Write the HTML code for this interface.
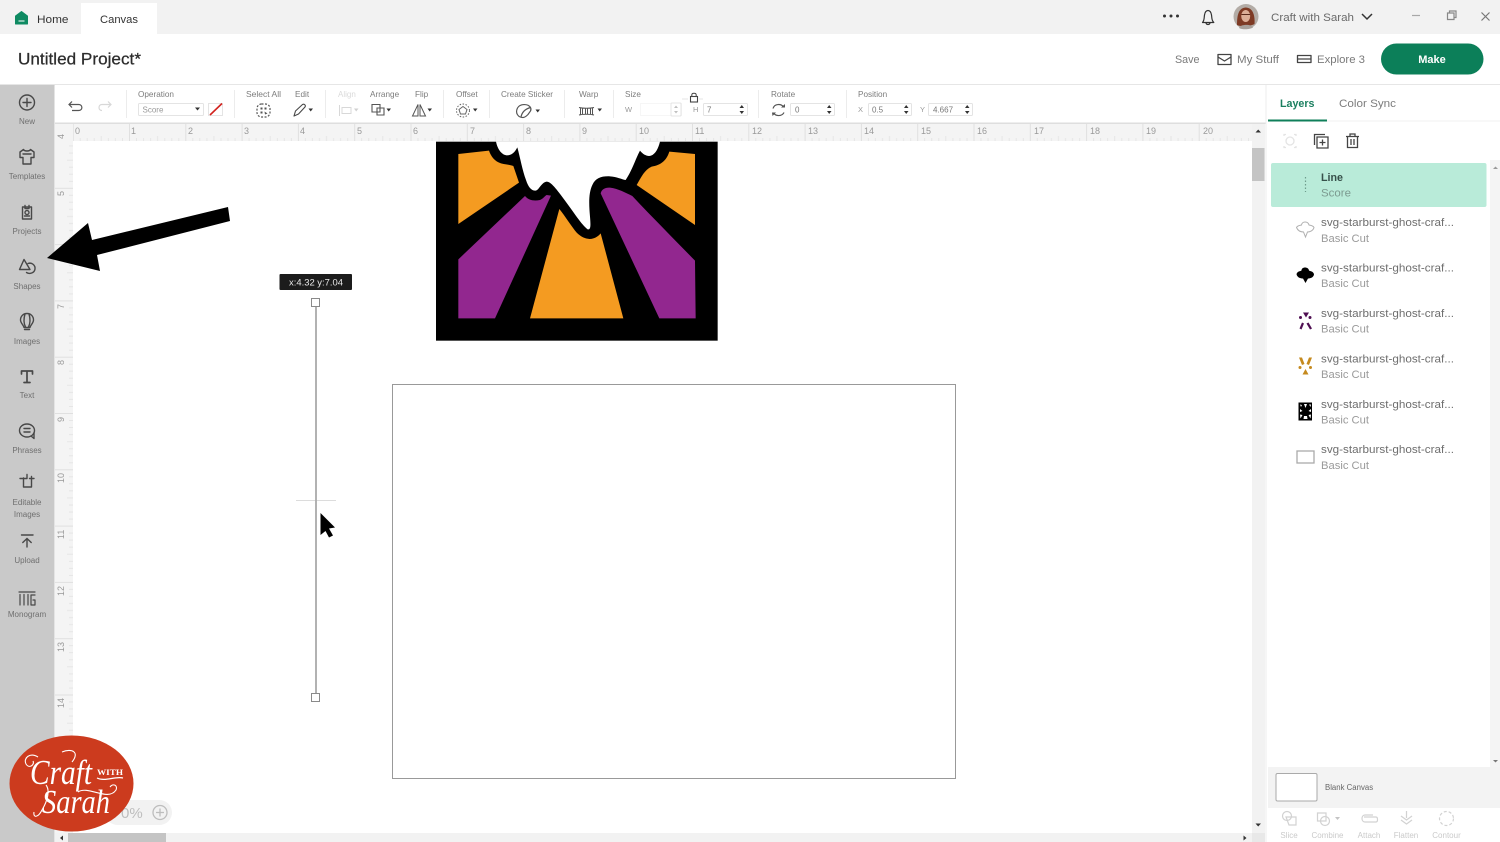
<!DOCTYPE html>
<html><head><meta charset="utf-8"><title>Untitled Project</title>
<style>
html,body{margin:0;padding:0;background:#fff;width:1500px;height:842px;overflow:hidden}
svg{display:block;position:absolute;left:0;top:0;filter:blur(.35px)}
text{font-family:"Liberation Sans",sans-serif}
.lab{font-size:8.200px;fill:#7c7c7c}
.sl{font-size:8px;fill:#6f6f6f;text-anchor:middle}
.ic{fill:none;stroke:#484848;stroke-width:1.400;stroke-linejoin:round;stroke-linecap:round}
.inp{fill:#fff;stroke:#e4e4e4;stroke-width:1}
.lt{font-size:11px;fill:#6e6e6e}
.ls{font-size:11px;fill:#9a9a9a}
.rl{font-size:9px;fill:#999}
.b{font-size:8px;fill:#cacaca;text-anchor:middle}
</style></head><body>
<svg width="1500" height="842" viewBox="0 0 1500 842" xmlns="http://www.w3.org/2000/svg">
<defs>
<pattern id="hr" patternUnits="userSpaceOnUse" x="72.700" y="124" width="56.300" height="17">
<rect width="56.300" height="17" fill="#f4f4f4"/>
<path d="M.5 0V17" stroke="#e0e0e0"/>
<path d="M7.500 14V17M14.500 14V17M21.600 14V17M28.600 12V17M35.700 14V17M42.700 14V17M49.800 14V17" stroke="#e6e6e6"/>
</pattern>
<pattern id="vr" patternUnits="userSpaceOnUse" x="55" y="131.500" width="18" height="56.300">
<rect width="18" height="56.300" fill="#f4f4f4"/>
<path d="M0 .5H18" stroke="#e0e0e0"/>
<path d="M14 7.500H18M14 14.500H18M14 21.600H18M12 28.600H18M14 35.700H18M14 42.700H18M14 49.800H18" stroke="#e6e6e6"/>
</pattern>
</defs>

<!-- top bar -->
<rect width="1500" height="34" fill="#f2f2f2"/>
<rect x="81" y="3" width="76" height="31" fill="#fff"/>
<path d="M15.500 24V16L21.500 11.500L27.500 16V24Z" fill="#0f8a62" stroke="#0f8a62" stroke-linejoin="round"/>
<path d="M18.500 21H24.500" stroke="#fff"/>
<text x="37" y="23" font-size="11" fill="#333" textLength="31.500" lengthAdjust="spacingAndGlyphs">Home</text>
<text x="100" y="23" font-size="11" fill="#333" textLength="38" lengthAdjust="spacingAndGlyphs">Canvas</text>
<circle cx="1164.500" cy="16" r="1.500" fill="#333"/><circle cx="1171" cy="16" r="1.500" fill="#333"/><circle cx="1177.500" cy="16" r="1.500" fill="#333"/>
<path d="M1202.500 22.500C1204.500 20.500 1204 18 1204.500 15C1205 12 1206.300 10.500 1208 10.500C1209.700 10.500 1211 12 1211.500 15C1212 18 1211.500 20.500 1213.800 22.500Z M1206 23C1206.500 25 1209.500 25 1210 23" fill="none" stroke="#333" stroke-width="1.200" stroke-linejoin="round"/>
<circle cx="1246" cy="16.500" r="12.500" fill="#b3aca6"/>
<path d="M1237 25C1237 18 1237.500 8 1245.500 7.500C1254 7.500 1255 18 1254.500 24C1251 26 1241 27 1237 25Z" fill="#7e3a24"/>
<ellipse cx="1245.700" cy="16" rx="4.500" ry="6" fill="#dcae96"/>
<path d="M1241.500 14.500H1250" stroke="#5a2b1c" stroke-width="1"/>
<path d="M1239 28C1240 24 1252 24 1253 27.500C1250 29.500 1243 30 1239 28Z" fill="#a8a09a"/>
<text x="1271" y="21" font-size="11.200" fill="#6a6a6a" textLength="83" lengthAdjust="spacingAndGlyphs">Craft with Sarah</text>
<path d="M1362 14L1367 19L1372 14" fill="none" stroke="#333" stroke-width="1.500"/>
<path d="M1412 15.500H1420" stroke="#a8a8a8" stroke-width="1.200"/>
<path d="M1447.500 13H1454V19.500H1447.500ZM1449.500 13V11H1456V17.500H1454" fill="none" stroke="#888" stroke-width="1.200"/>
<path d="M1481.500 12.500L1489.500 20.500M1489.500 12.500L1481.500 20.500" stroke="#777" stroke-width="1.200"/>

<!-- header -->
<rect y="34" width="1500" height="50" fill="#fff"/>
<text x="18" y="64.500" font-size="16.800" fill="#2c2c2c" stroke="#2c2c2c" stroke-width=".25" textLength="123" lengthAdjust="spacingAndGlyphs">Untitled Project*</text>
<text x="1175" y="63" font-size="11" fill="#7a7a7a" textLength="24.500" lengthAdjust="spacingAndGlyphs">Save</text>
<path d="M1218 59V54.500H1231V64.500H1218ZM1218 57L1224.500 61L1231 57" fill="none" stroke="#444" stroke-width="1.300" stroke-linejoin="round"/>
<text x="1237" y="63" font-size="11" fill="#7a7a7a" textLength="42" lengthAdjust="spacingAndGlyphs">My Stuff</text>
<path d="M1297.500 55.500H1311V62.500H1297.500ZM1297.500 59H1311" fill="none" stroke="#444" stroke-width="1.300" stroke-linejoin="round"/>
<text x="1317" y="63" font-size="11" fill="#7a7a7a" textLength="48" lengthAdjust="spacingAndGlyphs">Explore 3</text>
<rect x="1381" y="43.500" width="102.500" height="31" rx="15.500" fill="#0c7f59"/>
<text x="1432" y="63" font-size="11" font-weight="700" fill="#fff" text-anchor="middle">Make</text>
<rect y="84" width="1500" height="1.300" fill="#e6e6e6"/>

<!-- toolbar -->
<rect x="55" y="85" width="1211" height="38" fill="#fff"/>
<rect x="55" y="122.500" width="1211" height="1.800" fill="#dedede"/>
<path d="M126.500 90V118M234.500 90V118M325.500 90V118M443.500 90V118M489.500 90V118M564.500 90V118M613.500 90V118M758.500 90V118M846.500 90V118" stroke="#ececec"/>
<path d="M72 101.500L69 104.500L72 107.500M69 104.500H78.500C83 104.500 83 110.500 78.500 110.500H72" fill="none" stroke="#555" stroke-width="1.200"/>
<path d="M108 101.500L111 104.500L108 107.500M111 104.500H102C98 104.500 98 110.500 102 110.500" fill="none" stroke="#d8d8d8" stroke-width="1.200"/>

<text class="lab" x="138" y="97">Operation</text>
<rect class="inp" x="138.500" y="103.500" width="65" height="12" rx="1"/>
<text x="142.500" y="112.500" font-size="8" fill="#999">Score</text>
<path d="M195 107.500H200L197.500 110.500Z" fill="#333"/>
<rect class="inp" x="208.500" y="103.500" width="14" height="12"/>
<path d="M210 115L222 103.500" stroke="#d2231f" stroke-width="1.600"/>

<text class="lab" x="246" y="97" textLength="35" lengthAdjust="spacingAndGlyphs">Select All</text>
<rect x="257" y="104" width="13" height="13" rx="4.500" fill="none" stroke="#555" stroke-width="1.200" stroke-dasharray="2 1.500"/>
<path d="M260.500 107.500H262.500V109.500H260.500ZM264.500 107.500H266.500V109.500H264.500ZM260.500 111.500H262.500V113.500H260.500ZM264.500 111.500L267.500 113.500L265 114.500Z" fill="#555"/>
<text class="lab" x="295" y="97">Edit</text>
<path d="M294 116L295.500 111L302.500 104.500C304.500 103.500 306 105.500 305 107L298.500 114Z" class="ic" stroke-width="1.100" style="stroke-width:1.100"/>
<path d="M308.500 108.500H313L310.700 111.500Z" fill="#333"/>

<text x="338" y="97" font-size="8" fill="#dadada">Align</text>
<path d="M339.500 105V116M342 107.500H351V113.500H342Z" fill="none" stroke="#d8d8d8"/><path d="M354 108.500H358.500L356.200 111.500Z" fill="#d0d0d0"/>
<text class="lab" x="370" y="97">Arrange</text>
<path d="M372 104.500H380V112H372ZM377 108H384V115H377Z" fill="none" stroke="#555" stroke-width="1.100"/>
<path d="M386.500 108.500H391L388.700 111.500Z" fill="#333"/>
<text class="lab" x="415" y="97">Flip</text>
<path d="M418 104.500L412.500 116H418ZM420 104.500L425.500 116H420Z" fill="none" stroke="#555" stroke-width="1"/>
<path d="M427.500 108.500H432L429.700 111.500Z" fill="#333"/>
<text class="lab" x="456" y="97">Offset</text>
<path d="M463 106.500L467 109.500L465.500 114H460.500L459 109.500Z" fill="none" stroke="#666" stroke-width="1"/>
<circle cx="463" cy="110.500" r="6.500" fill="none" stroke="#666" stroke-width="1" stroke-dasharray="1.500 1.500"/>
<path d="M473 108.500H477.500L475.200 111.500Z" fill="#333"/>

<text class="lab" x="501" y="97" textLength="52" lengthAdjust="spacingAndGlyphs">Create Sticker</text>
<path d="M530.500 107.500C528 103.500 520 103.500 517.500 108C515 113 518 117.500 523 117.500C525 117.500 526.500 116 528 114.500L530.500 111C531 110 531 108.500 530.500 107.500ZM521 117C522 112 525 109 530.500 107.500" fill="none" stroke="#555" stroke-width="1.200"/>
<path d="M535.500 109.500H540L537.700 112.500Z" fill="#333"/>
<text class="lab" x="579" y="97">Warp</text>
<path d="M579 107.500C583 108.500 590 108.500 594 107.500M579 115C583 114 590 114 594 115M580.500 108V114.500M582.500 108V114.500M585.500 108V114.500M587.500 108V114.500M590.500 108V114.500M592.500 108V114.500" fill="none" stroke="#555" stroke-width="1"/>
<path d="M597.500 108.500H602L599.700 111.500Z" fill="#333"/>
<text class="lab" x="625" y="97">Size</text>
<path d="M682 99H688M699 99H703" stroke="#e4e4e4"/>
<rect x="690.500" y="96.500" width="7" height="5.500" fill="none" stroke="#444" stroke-width="1.100"/>
<path d="M691.800 96.500V95C691.800 92.700 696.200 92.700 696.200 95V96.500" fill="none" stroke="#444" stroke-width="1"/>
<text x="625" y="112" font-size="7.500" fill="#999">W</text>
<rect x="640.500" y="103.500" width="41" height="12" fill="#fff" stroke="#f6f6f6"/>
<rect x="671" y="103" width="10" height="13" rx="1" fill="#fff" stroke="#e4e4e4"/>
<path d="M674 108L676 105.500L678 108ZM674 111L676 113.500L678 111Z" fill="#c0c0c0"/>
<text x="693" y="112" font-size="7.500" fill="#999">H</text>
<rect class="inp" x="703.500" y="103.500" width="44" height="12" rx="1"/>
<text x="707" y="112.500" font-size="8" fill="#777">7</text>
<path d="M739.500 108L741.800 105L744 108ZM739.500 111L741.800 114L744 111Z" fill="#333"/>
<text class="lab" x="771" y="97">Rotate</text>
<path d="M773 108.500C774.500 103.500 781 103.500 783.500 107M784 112.500C782 116.500 776 116.500 773.500 113" fill="none" stroke="#555" stroke-width="1.200"/>
<path d="M781 107.500H785V104ZM772 112.500H776L772.500 116Z" fill="#555"/>
<rect class="inp" x="790.500" y="103.500" width="44" height="12" rx="1"/>
<text x="795" y="112.500" font-size="8" fill="#777">0</text>
<path d="M827 108L829.200 105L831.500 108ZM827 111L829.200 114L831.500 111Z" fill="#333"/>
<text class="lab" x="858" y="97">Position</text>
<text x="858" y="112" font-size="7.500" fill="#999">X</text>
<rect class="inp" x="868.500" y="103.500" width="43" height="12" rx="1"/>
<text x="872" y="112.500" font-size="8" fill="#777">0.5</text>
<path d="M904 108L906.200 105L908.500 108ZM904 111L906.200 114L908.500 111Z" fill="#333"/>
<text x="920" y="112" font-size="7.500" fill="#999">Y</text>
<rect class="inp" x="928.500" y="103.500" width="44" height="12" rx="1"/>
<text x="933" y="112.500" font-size="8" fill="#777">4.667</text>
<path d="M965 108L967.200 105L969.500 108ZM965 111L967.200 114L969.500 111Z" fill="#333"/>

<!-- canvas -->
<rect x="55" y="124" width="1211" height="718" fill="#fff"/>
<rect x="73" y="124" width="1179" height="17" fill="url(#hr)"/>
<rect x="55" y="124" width="18" height="17" fill="#f4f4f4"/>
<rect x="55" y="141" width="18" height="701" fill="url(#vr)"/>
<text class="rl" x="75" y="134">0</text><text class="rl" x="131" y="134">1</text><text class="rl" x="188" y="134">2</text><text class="rl" x="244" y="134">3</text><text class="rl" x="300" y="134">4</text><text class="rl" x="357" y="134">5</text><text class="rl" x="413" y="134">6</text><text class="rl" x="470" y="134">7</text><text class="rl" x="526" y="134">8</text><text class="rl" x="582" y="134">9</text><text class="rl" x="639" y="134">10</text><text class="rl" x="695" y="134">11</text><text class="rl" x="752" y="134">12</text><text class="rl" x="808" y="134">13</text><text class="rl" x="864" y="134">14</text><text class="rl" x="921" y="134">15</text><text class="rl" x="977" y="134">16</text><text class="rl" x="1034" y="134">17</text><text class="rl" x="1090" y="134">18</text><text class="rl" x="1146" y="134">19</text><text class="rl" x="1203" y="134">20</text>
<text class="rl" transform="translate(64 139) rotate(-90)">4</text><text class="rl" transform="translate(64 196) rotate(-90)">5</text><text class="rl" transform="translate(64 309) rotate(-90)">7</text><text class="rl" transform="translate(64 365) rotate(-90)">8</text><text class="rl" transform="translate(64 422) rotate(-90)">9</text><text class="rl" transform="translate(64 483) rotate(-90)">10</text><text class="rl" transform="translate(64 539) rotate(-90)">11</text><text class="rl" transform="translate(64 596) rotate(-90)">12</text><text class="rl" transform="translate(64 652) rotate(-90)">13</text><text class="rl" transform="translate(64 708) rotate(-90)">14</text>

<!-- artwork -->
<g transform="translate(425 130) scale(.33333)">
<rect x="33" y="35" width="845" height="597" fill="#000"/>
<path d="M213 35C218 60 232 76 246 76C260 76 270 66 277 52C286 85 292 120 303 150C310 172 320 183 332 182C342 181 348 158 365 155C378 155 395 178 420 212C445 245 470 285 488 298C498 300 497 285 495 260C492 225 490 190 502 165C512 143 530 138 555 139C575 140 590 148 602 150C622 120 630 90 645 62C655 75 668 80 678 77C692 72 700 55 705 35Z" fill="#fff"/>
<path d="M100 72L192 62C198 80 210 95 228 100C243 104 255 104 265 108L282 158L100 282Z" fill="#f49b21"/>
<path d="M100 388L300 198C310 210 325 214 345 210C355 206 360 197 365 195L378 197L210 565H100Z" fill="#92278f"/>
<path d="M403 237C420 258 440 290 455 308C472 325 490 330 505 325C515 322 522 316 527 310L595 565H315Z" fill="#f49b21"/>
<path d="M527 190C530 178 540 172 555 173C580 176 600 188 622 198C680 260 750 330 810 392L812 565H703Z" fill="#92278f"/>
<path d="M733 65L810 72V285L635 165C650 140 658 120 680 110C710 105 725 90 733 65Z" fill="#f49b21"/>
</g>

<!-- mat rect -->
<rect x="392.500" y="384.500" width="563" height="394" fill="#fff" stroke="#999" stroke-width="1"/>

<!-- line -->
<path d="M296 500.500H336" stroke="#dcdcdc"/>
<path d="M316 307V693" stroke="#aaa" stroke-width="1.800"/>
<rect x="311.500" y="298.500" width="8" height="8" fill="#fff" stroke="#8a8a8a"/>
<rect x="311.500" y="693.500" width="8" height="8" fill="#fff" stroke="#8a8a8a"/>
<rect x="279.500" y="274" width="72.500" height="16" rx="1" fill="#1c1c1c"/>
<text x="289" y="285.500" font-size="9" fill="#e8e8e8" textLength="54" lengthAdjust="spacingAndGlyphs">x:4.32 y:7.04</text>
<path d="M320.500 513L335 527.500L329 528.500L333 535.500L329 537.500L325.500 531L320.500 535Z" fill="#000"/>

<!-- sidebar -->
<rect y="85" width="54.500" height="757" fill="#c9c9c9"/>
<g class="ic">
<circle cx="27" cy="102.500" r="7.500"/><path d="M27 98.500V106.500M23 102.500H31"/>
<path d="M23.500 149.500L20 152V157.500H23V164H31V157.500H34V152L30.500 149.500C29.500 151.500 24.500 151.500 23.500 149.500Z"/><path d="M23 154H31"/>
<path d="M22.500 207H31.500V219H22.500Z"/><path d="M25 205.500V208.500H29V205.500"/><circle cx="27" cy="212.500" r="2"/><path d="M24.500 216H29.500"/>
<path d="M24 259.500L19.500 269.500H30L24 259.500Z"/><path d="M28 263.500C32 262 35.500 265.500 35 269C34.500 273 29.500 274.500 26.500 272.500"/>
<path d="M27 313.500C31 313.500 33.500 316.500 33.500 320C33.500 323 30.500 325 30 327.500H24C23.500 325 20.500 323 20.500 320C20.500 316.500 23 313.500 27 313.500ZM24.500 329.500H29.500M25 314C23.500 319 24 324 25.500 327M29 314C30.500 319 30 324 28.500 327"/>
<path d="M21.500 374V371H32.500V374M27 371V382.500M24 382.500H30" style="stroke-width:1.700"/>
<ellipse cx="27" cy="430.500" rx="7.500" ry="6.500"/><path d="M24 428.500H30M24 432H30M31 436L34 438.500V433"/>
<path d="M23.500 478V487H31.500M31.500 476.500V487M20 478.500H27V474.500M29.500 478.500H34"/>
<path d="M21.500 535H33M27 547V538.500M22.800 542.500L27 538.500L31.200 542.500"/>
<path d="M19 592H35M20 594.500V605M24 594.500V605M28 594.500V605M35 595H31V605H35V600H33" style="stroke-width:1.200"/>
</g>
<text class="sl" x="27" y="124">New</text>
<text class="sl" x="27" y="179">Templates</text>
<text class="sl" x="27" y="234">Projects</text>
<text class="sl" x="27" y="289">Shapes</text>
<text class="sl" x="27" y="344">Images</text>
<text class="sl" x="27" y="398">Text</text>
<text class="sl" x="27" y="453">Phrases</text>
<text class="sl" x="27" y="505">Editable</text>
<text class="sl" x="27" y="517">Images</text>
<text class="sl" x="27" y="563">Upload</text>
<text class="sl" x="27" y="617">Monogram</text>

<!-- big arrow (over sidebar) -->
<path d="M47 258L88 223L92 240L228 207L230 221L97 255L100 271Z" fill="#000"/>

<!-- scrollbars -->
<rect x="1252" y="124" width="13" height="718" fill="#f2f2f2"/>
<rect x="1252" y="148" width="12.500" height="33" fill="#c4c4c4"/>
<path d="M1255.500 132.500H1261L1258.200 129.500Z" fill="#333"/>
<path d="M1255.500 823.500H1261L1258.200 826.500Z" fill="#333"/>
<rect x="55" y="833" width="1197" height="9" fill="#f2f2f2"/>
<rect x="68" y="833" width="98" height="9" fill="#c4c4c4"/>
<rect x="1252" y="833" width="13" height="9" fill="#e8e8e8"/>
<path d="M63 835.500V840.500L60 838Z" fill="#333"/>
<path d="M1243.500 835.500V840.500L1246.500 838Z" fill="#333"/>

<!-- zoom bubble -->
<rect x="105" y="800" width="67" height="25" rx="12.500" fill="#f2f2f2"/>
<text x="121" y="818" font-size="15" fill="#bdbdbd">0%</text>
<circle cx="160" cy="812.500" r="7" fill="none" stroke="#bdbdbd" stroke-width="1.300"/>
<path d="M156 812.500H164M160 808.500V816.500" stroke="#bdbdbd" stroke-width="1.300"/>

<!-- logo -->
<ellipse cx="71.500" cy="783.500" rx="62" ry="48" fill="#cc3b1e"/>
<text x="30" y="784" font-size="35" font-style="italic" fill="#fff" textLength="62" lengthAdjust="spacingAndGlyphs" style="font-family:'Liberation Serif',serif">Craft</text>
<text x="97" y="775" font-size="8" font-weight="700" fill="#fff" style="font-family:'Liberation Serif',serif" textLength="26" lengthAdjust="spacingAndGlyphs">WITH</text>
<path d="M97 778C105 782 115 776 123 778" fill="none" stroke="#fff" stroke-width="1.200"/>
<text x="42" y="813" font-size="34" font-style="italic" fill="#fff" textLength="68" lengthAdjust="spacingAndGlyphs" style="font-family:'Liberation Serif',serif">Sarah</text>
<path d="M38 757C30 752 23 758 26 764C29 769 35 765 33 761M62 752C72 748 80 752 72 762M78 792C88 785 108 802 116 790C118 785 113 783 110 787M46 785C50 790 48 800 42 810C38 818 33 818 34 812" fill="none" stroke="#fff" stroke-width="1.100"/>

<!-- right panel -->
<rect x="1266" y="85" width="234" height="757" fill="#fff"/>
<rect x="1265.500" y="85" width="1" height="757" fill="#ececec"/>
<text x="1280" y="107" font-size="11" font-weight="700" fill="#1a7f5f" textLength="34.500" lengthAdjust="spacingAndGlyphs">Layers</text>
<text x="1339" y="107" font-size="11.200" fill="#7d7d7d" textLength="57" lengthAdjust="spacingAndGlyphs">Color Sync</text>
<rect x="1268" y="119.500" width="59" height="2" fill="#0f7f5a"/>
<rect x="1327" y="120.500" width="173" height="1" fill="#f0f0f0"/>
<circle cx="1290" cy="141" r="4" fill="none" stroke="#e4e4e4" stroke-width="1.300"/>
<path d="M1284 136V134.500H1286M1294 134.500H1296V136M1296 146V147.500H1294M1286 147.500H1284V146" fill="none" stroke="#e4e4e4" stroke-width="1.300"/>
<path d="M1314.500 145V134.500H1325M1317 137H1328V148H1317ZM1322.500 139.500V145.500M1319.500 142.500H1325.500" fill="none" stroke="#444" stroke-width="1.300"/>
<path d="M1346 136.500H1359M1350 136.500V134H1355V136.500M1347.500 136.500V147.500H1357.500V136.500M1351 139V145M1354 139V145" fill="none" stroke="#444" stroke-width="1.300"/>
<rect x="1490" y="160" width="10" height="610" fill="#f4f4f4"/>
<path d="M1493 169H1498L1495.500 166.500Z" fill="#999"/>
<path d="M1493 760H1498L1495.500 762.500Z" fill="#777"/>

<rect x="1271" y="163" width="215.500" height="44" rx="2" fill="#b9ebd9"/>
<path d="M1305.500 177V192" stroke="#6f9d8d" stroke-width="1.200" stroke-dasharray="1.500 2"/>
<text x="1321" y="181" font-size="11" font-weight="700" fill="#37504a" textLength="22" lengthAdjust="spacingAndGlyphs">Line</text>
<text x="1321" y="196.500" font-size="11" fill="#7c9a90" textLength="30" lengthAdjust="spacingAndGlyphs">Score</text>

<text class="lt" x="1321" y="226" textLength="133" lengthAdjust="spacingAndGlyphs">svg-starburst-ghost-craf...</text><text class="ls" x="1321" y="242" textLength="48" lengthAdjust="spacingAndGlyphs">Basic Cut</text>
<text class="lt" x="1321" y="271.500" textLength="133" lengthAdjust="spacingAndGlyphs">svg-starburst-ghost-craf...</text><text class="ls" x="1321" y="287" textLength="48" lengthAdjust="spacingAndGlyphs">Basic Cut</text>
<text class="lt" x="1321" y="317" textLength="133" lengthAdjust="spacingAndGlyphs">svg-starburst-ghost-craf...</text><text class="ls" x="1321" y="332.500" textLength="48" lengthAdjust="spacingAndGlyphs">Basic Cut</text>
<text class="lt" x="1321" y="362.500" textLength="133" lengthAdjust="spacingAndGlyphs">svg-starburst-ghost-craf...</text><text class="ls" x="1321" y="378" textLength="48" lengthAdjust="spacingAndGlyphs">Basic Cut</text>
<text class="lt" x="1321" y="408" textLength="133" lengthAdjust="spacingAndGlyphs">svg-starburst-ghost-craf...</text><text class="ls" x="1321" y="423.500" textLength="48" lengthAdjust="spacingAndGlyphs">Basic Cut</text>
<text class="lt" x="1321" y="453" textLength="133" lengthAdjust="spacingAndGlyphs">svg-starburst-ghost-craf...</text><text class="ls" x="1321" y="469" textLength="48" lengthAdjust="spacingAndGlyphs">Basic Cut</text>

<path d="M1296.500 227.500C1298 225 1300.500 225.500 1301.500 225C1302 221 1308 221 1309 225C1310 225.500 1312.500 225 1314 227.500C1313 231 1309.500 232 1307.500 232L1305.500 237L1303.500 232C1301 232 1298 231 1296.500 227.500Z" fill="#fff" stroke="#b0b0b0"/>
<path d="M1296.500 274C1298 270.500 1300.500 271.500 1301.500 270.500C1301.500 266.500 1308.500 266.500 1309 270.500C1310 271.500 1312.500 270.500 1314 274C1314 277.500 1310 278.500 1308 278.500L1305.500 283L1303 278.500C1300.500 278.500 1297 277.500 1296.500 274Z" fill="#000"/>
<g fill="#4f0f52"><path d="M1303 312.500H1309L1306 317.500Z"/><circle cx="1300.500" cy="317.500" r="1.500"/><circle cx="1310" cy="317.500" r="1.500"/><path d="M1302 322.500L1304 323.500L1301.500 329.500L1299.500 328.500Z"/><path d="M1308.500 322.500L1306.500 323.500L1310 329.500L1312 328.500Z"/></g>
<g fill="#c58a1e"><path d="M1299 357.500L1302 357.500L1304.500 364L1302 365ZM1312 357.500L1309 357.500L1306.500 364L1309 365Z"/><circle cx="1300" cy="367.500" r="1.500"/><circle cx="1310.500" cy="367.500" r="1.500"/><path d="M1305.500 369L1308.500 374.500H1302.500Z"/></g>
<rect x="1298.500" y="402.500" width="13.500" height="18" fill="#000"/>
<path d="M1300 404.500L1302 405L1301 407ZM1304 404L1307 404L1305.500 408ZM1309 404.500L1311 404.500L1310.500 407ZM1300 409L1302.500 411L1300 412ZM1311 409L1308.500 411L1311 412ZM1300 414.500L1302.500 415L1300.500 418.500ZM1304 416L1307 416L1307.500 419H1303.500ZM1311 414.500L1308.500 415L1310.500 418.500Z" fill="#fff"/>
<rect x="1297" y="451" width="17" height="12" fill="#fff" stroke="#aaa" stroke-width="1.300"/>

<!-- blank canvas -->
<rect x="1268" y="767" width="232" height="41" fill="#f3f3f3"/>
<rect x="1276" y="773.500" width="41" height="27.500" rx="1.500" fill="#fff" stroke="#aaa"/>
<text x="1325" y="790" font-size="7.800" fill="#666">Blank Canvas</text>
<g fill="none" stroke="#d2d2d2" stroke-width="1.200">
<circle cx="1287" cy="816" r="4.500"/><path d="M1286 817H1296V825H1289Z"/>
<path d="M1317.500 813H1326V821H1317.500Z"/><circle cx="1325" cy="821" r="4.500"/>
<path d="M1364 817H1376C1378 817 1378 822 1376 822H1365C1361 822 1361 815 1365 815H1373"/>
<path d="M1401 816L1406.500 820L1412 816M1401 820L1406.500 824L1412 820M1406.500 811V818"/>
<circle cx="1446.500" cy="818.500" r="7" stroke-dasharray="3 2"/>
</g>
<path d="M1335 817H1340L1337.500 820Z" fill="#c4c4c4"/>
<text class="b" x="1289" y="838">Slice</text>
<text class="b" x="1327.500" y="838">Combine</text>
<text class="b" x="1369" y="838">Attach</text>
<text class="b" x="1406" y="838">Flatten</text>
<text class="b" x="1446.500" y="838">Contour</text>
</svg>
</body></html>
